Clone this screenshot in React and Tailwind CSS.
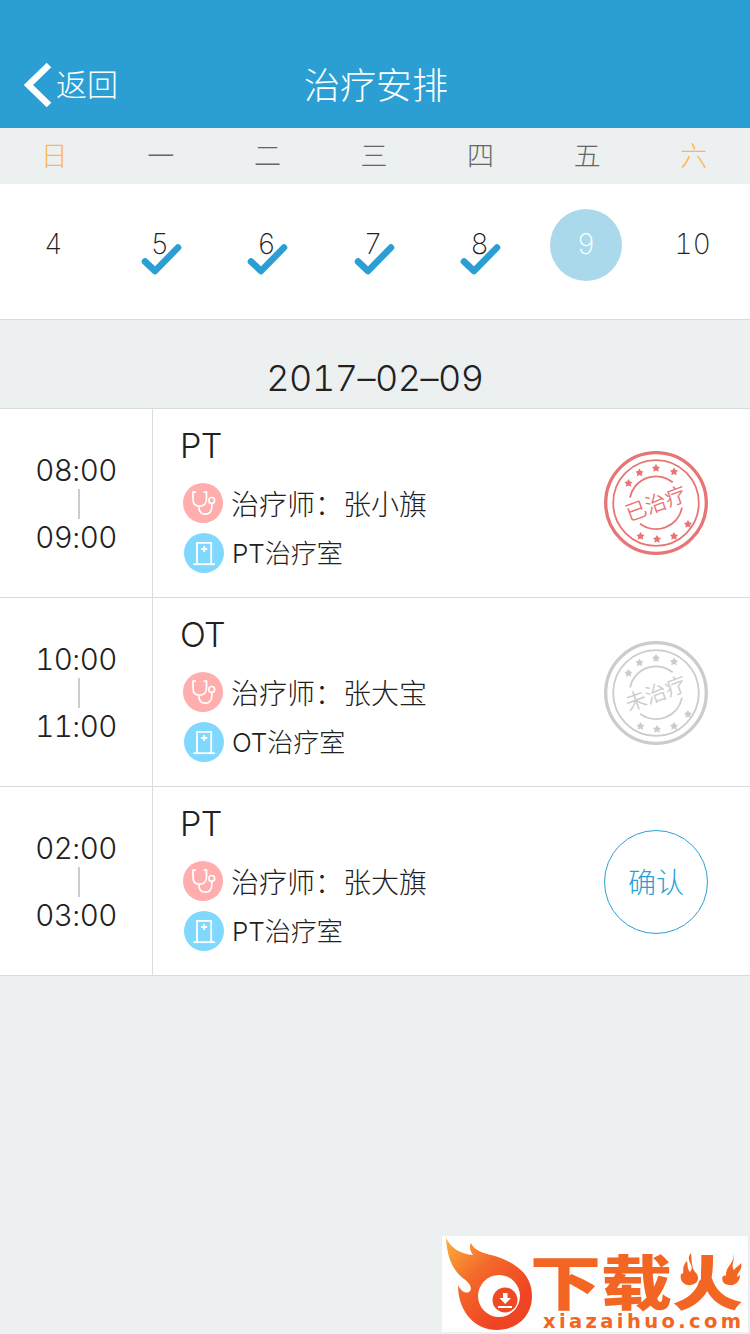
const weekDays = [
  { label: '日', weekend: true },
  { label: '一' },
  { label: '二' },
  { label: '三' },
  { label: '四' },
  { label: '五' },
  { label: '六', weekend: true },
];

const dates = [
  { day: 4 },
  { day: 5, checked: true },
  { day: 6, checked: true },
  { day: 7, checked: true },
  { day: 8, checked: true },
  { day: 9, selected: true },
  { day: 10 },
];

const sessions = [
  { start: '08:00', end: '09:00', type: 'PT', therapist: '张小旗', room: 'PT治疗室', status: 'done' },
  { start: '10:00', end: '11:00', type: 'OT', therapist: '张大宝', room: 'OT治疗室', status: 'missed' },
  { start: '02:00', end: '03:00', type: 'PT', therapist: '张大旗', room: 'PT治疗室', status: 'pending' },
];

// star centres inside the 104px stamp
const stars = [
  [24.5, 32], [35.5, 21.5], [52, 17], [70, 20.5],
  [84, 73], [70, 85], [53, 88], [36.5, 85],
];

function CheckMark() {
  return (
    <svg className="absolute left-[34px] top-[32px]" width="44" height="34" viewBox="0 0 44 34" fill="none">
      <path d="M4 20.5 L14 30 L37 6.5" stroke="#2b9fd3" strokeWidth="6.6" strokeLinecap="round" strokeLinejoin="round" />
    </svg>
  );
}

function Stamp({ text, color }) {
  return (
    <svg width="104" height="104" viewBox="0 0 104 104" fill="none" stroke={color}>
      <circle cx="52" cy="52" r="50.3" strokeWidth="3.3" />
      <circle cx="52" cy="52" r="42.8" strokeWidth="1.8" />
      <path d="M26 46.5 A26.5 26.5 0 0 1 68.7 31.3" strokeWidth="1.8" />
      <path d="M78 56.7 A26.5 26.5 0 0 1 36 72.7" strokeWidth="1.8" />
      {stars.map(([x, y]) => (
        <path
          key={`${x}-${y}`}
          transform={`translate(${x} ${y})`}
          d="M0 -4 L1.5 -1.5 L4 -1.1 L2.2 0.9 L2.7 3.8 L0 2.6 L-2.7 3.8 L-2.2 0.9 L-4 -1.1 L-1.5 -1.5 Z"
          fill={color}
          stroke="none"
        />
      ))}
      <text
        x="51.5"
        y="60"
        transform="rotate(-20 52 52)"
        textAnchor="middle"
        fontSize="21"
        fill={color}
        stroke="none"
        className="font-['Noto_Sans_CJK_SC',sans-serif] font-[350]"
      >
        {text}
      </text>
    </svg>
  );
}

function StethoscopeIcon() {
  return (
    <svg width="40" height="40" viewBox="0 0 40 40" fill="none" stroke="#fff" strokeWidth="1.7">
      <circle cx="20" cy="20" r="20" fill="#ffadad" stroke="none" />
      <path d="M13 9.2 H10 V16 C10 20.5 12.5 23.2 16.5 23.2 S23.5 20.5 23.5 16 V9.2 H20.5" />
      <path d="M15.8 23.5 C16 28.5 18.2 31.2 22 31.2 C26 31.2 28.8 28.5 28.8 24 V20.5" />
      <circle cx="28.7" cy="17.4" r="2.9" />
    </svg>
  );
}

function RoomIcon() {
  return (
    <svg width="40" height="40" viewBox="0 0 40 40" fill="none" stroke="#fff" strokeWidth="1.8">
      <circle cx="20" cy="20" r="20" fill="#80d8ff" stroke="none" />
      <path d="M13 31 V9.8 H27.2 V31" />
      <path d="M9.3 31.2 H31" />
      <path d="M20.2 13 V19 M17.2 16 H23.2" />
    </svg>
  );
}

function SessionStatus({ status }) {
  if (status === 'done') return <Stamp text="已治疗" color="#e87474" />;
  if (status === 'missed') return <Stamp text="未治疗" color="#cccccc" />;
  return (
    <button className="h-[104px] w-[104px] rounded-full border border-[#2b9fd3] pt-0.5 text-[28px] font-light text-[#2b9fd3]">
      确认
    </button>
  );
}

function SessionRow({ session }) {
  return (
    <div className="flex h-[189px] border-b border-[#d9dcdd] bg-white">
      <div className="flex w-[153px] flex-col items-center border-r border-[#d9dcdd] pt-[43px] text-[29.5px] leading-[37px] tracking-[-0.6px] tabular-nums">
        <span>{session.start}</span>
        <span className="ml-[5px] h-[30px] w-[2px] bg-[#cccccc]" />
        <span>{session.end}</span>
      </div>
      <div className="flex-1 pl-[27px] pt-[13px]">
        <h2 className="text-[34px] leading-[48px] tracking-[-0.5px]">{session.type}</h2>
        <div className="ml-[3px] mt-[13px] flex h-10 items-center gap-2 text-[28px]">
          <StethoscopeIcon />
          <span className="pt-[3px] leading-10">治疗师：{session.therapist}</span>
        </div>
        <div className="ml-1 mt-[10px] flex h-10 items-center gap-2 text-[26px]">
          <RoomIcon />
          <span className="pt-[2px] leading-10">{session.room}</span>
        </div>
      </div>
      <div className={`flex w-[146px] items-center ${session.status === 'done' ? '' : 'pt-[2px]'}`}>
        <SessionStatus status={session.status} />
      </div>
    </div>
  );
}

function SiteLogo() {
  return (
    <svg width="306" height="96" viewBox="0 0 306 96" className="bg-[#fefefe]">
      <defs>
        <linearGradient id="flame" x1="0" y1="0" x2="0.7" y2="0.8">
          <stop offset="0" stopColor="#fbb03b" />
          <stop offset="0.5" stopColor="#f4682a" />
          <stop offset="1" stopColor="#ef4423" />
        </linearGradient>
      </defs>
      <path
        d="M4 2 C9 12 18 18 31 19 C28 15 27 11 29 7 C33 16 43 17 56 21 C76 28 90 40 90 60 C90 80 75 94 55 94 C34 94 16 77 16 49 C19 55 23 58 27 56 C31 53 28 47 22 43 C10 34 5 20 4 2 Z"
        fill="url(#flame)"
      />
      <circle cx="57" cy="60" r="21" fill="#fff" />
      <circle cx="63" cy="64" r="12.5" fill="#ef4a24" />
      <path d="M61 57 H65.5 V62 H69 L63.2 68 L57.5 62 H61 Z M56 70 H70 V72 H56 Z" fill="#fff" />
      <text
        x="88"
        y="68.5"
        fontSize="59"
        textLength="213"
        lengthAdjust="spacingAndGlyphs"
        fill="#f26522"
        className="font-['Noto_Sans_CJK_SC',sans-serif] font-black"
      >
        下载火
      </text>
      {/* the two side strokes of the last character burn as small flames */}
      <g fill="#fefefe">
        <path d="M233 16 H259 V43 L250 52 H233 Z" />
        <path d="M273 16 H302 V52 H283 L273 43 Z" />
      </g>
      <g fill="#f26522">
        <path d="M249 17 C242 25 254 29 248 36 C245 33 246 29 245 25 C238 32 244 38 239 38 C237 46 244 50 249 49 C257 48 258 40 253 36 C249 30 250 24 249 17 Z" />
        <path d="M291 17 C294 27 283 30 284 40 C279 37 278 49 287 49 C294 50 298 45 298 39 L295 41 C295 36 301 34 299 27 C297 30 294 31 292 34 C288 29 294 24 291 17 Z" />
      </g>
      <text
        x="101"
        y="91.5"
        fontSize="19.5"
        textLength="198"
        lengthAdjust="spacing"
        fill="#f26522"
        className="font-['DejaVu_Sans',sans-serif] font-bold"
      >
        xiazaihuo.com
      </text>
    </svg>
  );
}

export default function App() {
  return (
    <div className="flex h-[1334px] w-[750px] flex-col overflow-hidden bg-[#ecf0f1] font-['Inter','Noto_Sans_CJK_SC',sans-serif] font-light text-[#212121]">
      <header className="grid h-32 grid-cols-3 items-center bg-[#2b9fd3] pt-[42px] text-white">
        <button className="flex items-center pl-6 text-[31px]">
          <svg width="28" height="46" viewBox="0 0 28 46" fill="none">
            <path d="M25 3 L4.5 23 L25 43" stroke="#fff" strokeWidth="6.5" />
          </svg>
          <span className="ml-1">返回</span>
        </button>
        <h1 className="pl-0.5 pt-0.5 text-center text-[36px]">治疗安排</h1>
      </header>

      <div className="ml-px grid h-14 w-[746px] grid-cols-7 items-center pt-0.5 text-center text-[27px] text-[#666666]">
        {weekDays.map((d) => (
          <span key={d.label} className={d.weekend ? 'text-[#ffb74d]' : ''}>{d.label}</span>
        ))}
      </div>

      <div className="border-b border-[#d9dcdd] bg-white">
        <div className="grid h-[135px] w-[746px] grid-cols-7 pt-[25px] text-[28px] tabular-nums">
          {dates.map((d) => (
            <div key={d.day} className="relative flex justify-center">
              <span
                className={`flex h-[72px] w-[72px] items-center justify-center rounded-full pb-0.5 font-extralight ${
                  d.selected ? 'bg-[#aad9ec] text-white' : ''
                }`}
              >
                {d.day}
              </span>
              {d.checked && <CheckMark />}
            </div>
          ))}
        </div>
      </div>

      <div className="h-[89px] border-b border-[#d9dcdd] pt-[34px] text-center text-[36px] leading-[48px] tracking-[-0.5px] tabular-nums">
        2017–02–09
      </div>

      <main>
        {sessions.map((s) => (
          <SessionRow key={s.start} session={s} />
        ))}
      </main>

      <footer className="mt-auto flex justify-end pb-[2px] pr-[2px]">
        <SiteLogo />
      </footer>
    </div>
  );
}
